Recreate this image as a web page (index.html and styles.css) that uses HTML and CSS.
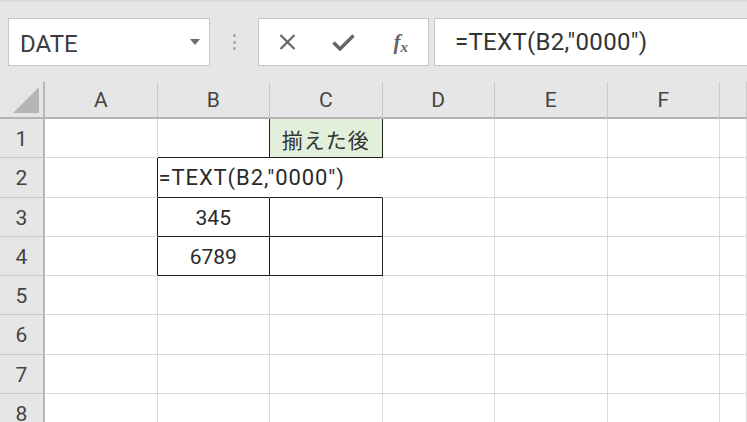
FILE: index.html
```html
<!DOCTYPE html>
<html lang="ja">
<head>
<meta charset="utf-8">
<title>Excel TEXT</title>
<link rel="stylesheet" href="styles.css">
</head>
<body>
<div class="app">
  <div class="fbar">
    <div class="namebox">
      <span class="name">DATE</span>
      <svg class="drop" width="10" height="6" viewBox="0 0 10 6"><path d="M0 0H10L5 6Z" fill="#6e6e6e"/></svg>
    </div>
    <div class="grip"><i></i><i></i><i></i></div>
    <div class="fnbox">
      <span class="fnbtn">
        <svg width="17" height="16" viewBox="0 0 17 16"><path d="M1.5 1 15.5 15M15.5 1 1.5 15" stroke="#666" stroke-width="2.2" fill="none"/></svg>
      </span>
      <span class="fnbtn">
        <svg width="23" height="17" viewBox="0 0 23 17"><path d="M1.5 8.5 8 15 21.5 1.5" stroke="#666" stroke-width="3.4" fill="none" stroke-linejoin="miter"/></svg>
      </span>
      <span class="fnbtn fx"><span class="f">f</span><span class="x">x</span></span>
    </div>
    <div class="formula">=TEXT(B2,"0000")</div>
  </div>

  <div class="sheet">
    <div class="hd corner"><span class="tri"></span></div>
    <div class="hd col">A</div>
    <div class="hd col">B</div>
    <div class="hd col">C</div>
    <div class="hd col">D</div>
    <div class="hd col">E</div>
    <div class="hd col">F</div>
    <div class="hd col"></div>

    <div class="hd row">1</div>
    <div class="c"></div>
    <div class="c bR bB"></div>
    <div class="c bR bB green jp">揃えた後</div>
    <div class="c"></div><div class="c"></div><div class="c"></div><div class="c"></div>

    <div class="hd row">2</div>
    <div class="c bR"></div>
    <div class="c bB noR txt">=TEXT(B2,"0000")</div>
    <div class="c bB noR"></div>
    <div class="c"></div><div class="c"></div><div class="c"></div><div class="c"></div>

    <div class="hd row">3</div>
    <div class="c bR"></div>
    <div class="c bR bB num">345</div>
    <div class="c bR bB"></div>
    <div class="c"></div><div class="c"></div><div class="c"></div><div class="c"></div>

    <div class="hd row">4</div>
    <div class="c bR"></div>
    <div class="c bR bB num">6789</div>
    <div class="c bR bB"></div>
    <div class="c"></div><div class="c"></div><div class="c"></div><div class="c"></div>

    <div class="hd row">5</div>
    <div class="c"></div><div class="c"></div><div class="c"></div><div class="c"></div><div class="c"></div><div class="c"></div><div class="c"></div>
    <div class="hd row">6</div>
    <div class="c"></div><div class="c"></div><div class="c"></div><div class="c"></div><div class="c"></div><div class="c"></div><div class="c"></div>
    <div class="hd row">7</div>
    <div class="c"></div><div class="c"></div><div class="c"></div><div class="c"></div><div class="c"></div><div class="c"></div><div class="c"></div>
    <div class="hd row">8</div>
    <div class="c"></div><div class="c"></div><div class="c"></div><div class="c"></div><div class="c"></div><div class="c"></div><div class="c"></div>
  </div>
</div>
</body>
</html>
```
FILE: styles.css
```css
html, body {
  margin: 0;
  padding: 0;
}
body {
  width: 747px;
  height: 422px;
  overflow: hidden;
  background: #e6e6e6;
  font-family: Roboto, "Noto Sans CJK JP", sans-serif;
}
.app {
  width: 747px;
  height: 422px;
  overflow: hidden;
  border-top: 2px solid #dcdcdc;
  box-sizing: border-box;
}
.fbar {
  display: flex;
  align-items: center;
  height: 80px;
  padding-left: 8px;
  box-sizing: border-box;
}
.namebox {
  width: 202px;
  height: 48px;
  box-sizing: border-box;
  border: 1px solid #c6c6c6;
  background: #fff;
  display: flex;
  align-items: center;
  justify-content: space-between;
  padding: 3px 9px 0 11px;
}
.name {
  font-size: 24px;
  color: #3c3c3c;
}
.drop {
  margin-bottom: 4px;
}
.grip {
  width: 48px;
  height: 16px;
  display: flex;
  flex-direction: column;
  align-items: center;
  justify-content: space-between;
}
.grip i {
  display: block;
  width: 3px;
  height: 3px;
  border-radius: 50%;
  background: #a6a6a6;
}
.fnbox {
  width: 171px;
  height: 48px;
  box-sizing: border-box;
  border: 1px solid #c6c6c6;
  background: #fff;
  display: grid;
  grid-template-columns: repeat(3, 1fr);
  align-items: center;
  justify-items: center;
}
.fnbtn {
  display: flex;
  align-items: center;
  justify-content: center;
}
.fx {
  font-family: "Liberation Serif", serif;
  font-style: italic;
  font-weight: bold;
  color: #666;
  line-height: 1;
  align-items: baseline;
  padding-left: 2px;
}
.fx .f {
  font-size: 21px;
}
.fx .x {
  font-size: 15px;
  position: relative;
  top: 3px;
  margin-left: 0;
}
.formula {
  flex: 1;
  height: 48px;
  margin-left: 5px;
  box-sizing: border-box;
  border: 1px solid #c6c6c6;
  border-right: none;
  background: #fff;
  display: flex;
  align-items: center;
  padding: 0 0 1px 20px;
  font-size: 24px;
  letter-spacing: 0.3px;
  color: #333;
  white-space: nowrap;
}

.sheet {
  display: grid;
  grid-template-columns: 45px repeat(6, 112.5px) 1fr;
  grid-template-rows: 37px repeat(8, 39.25px);
  background: #fff;
}
.hd {
  background: #e6e6e6;
  color: #444;
  font-size: 21px;
  display: flex;
  align-items: center;
  justify-content: center;
  box-sizing: border-box;
}
.hd.col {
  border-right: 1px solid #c8c8c8;
  border-bottom: 2px solid #b4b4b4;
  padding-top: 1px;
}
.hd.corner {
  border-right: 2px solid #b8b8b8;
  border-bottom: 2px solid #b4b4b4;
  align-items: flex-end;
  justify-content: flex-end;
  padding: 0 4px 4px 0;
}
.tri {
  width: 0;
  height: 0;
  border-left: 26px solid transparent;
  border-bottom: 26px solid #b4b4b4;
}
.hd.row {
  border-right: 2px solid #b8b8b8;
  border-bottom: 1px solid #c8c8c8;
  padding-top: 2px;
}
.c {
  box-sizing: border-box;
  border-right: 1px solid #d9d9d9;
  border-bottom: 1px solid #d9d9d9;
  display: flex;
  align-items: center;
  font-size: 21px;
  color: #2a2a2a;
  white-space: nowrap;
  min-width: 0;
}
.c.bR { border-right-color: #1e1e1e; }
.c.bB { border-bottom-color: #1e1e1e; }
.c.noR { border-right-color: transparent; }
.green {
  background: #e2efda;
  justify-content: center;
}
.jp {
  font-family: "Noto Sans CJK JP", sans-serif;
  font-size: 21px;
  letter-spacing: 1px;
  color: #333;
  padding-top: 1px;
}
.txt {
  font-size: 22px;
  letter-spacing: 0.9px;
  padding-left: 1px;
  padding-top: 1px;
  overflow: visible;
}
.num {
  justify-content: center;
  padding-top: 3px;
}
```
